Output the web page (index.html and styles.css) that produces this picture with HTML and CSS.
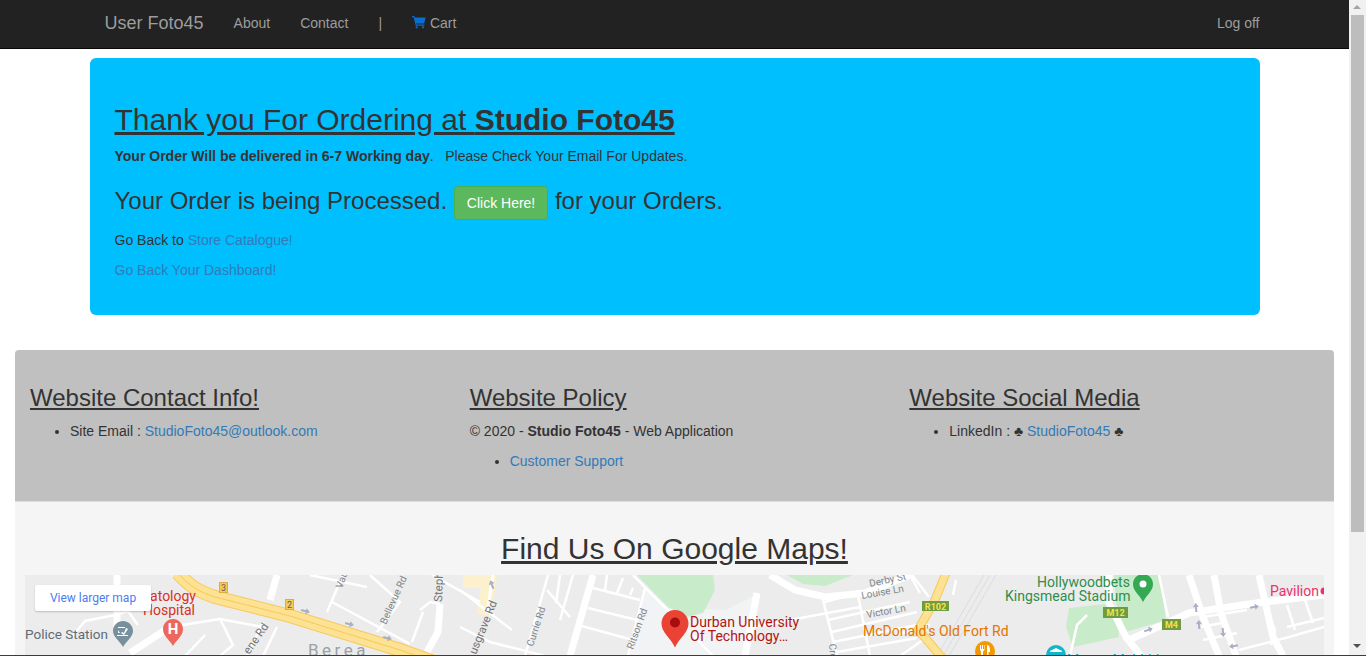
FILE: index.html
```html
<!DOCTYPE html>
<html>
<head>
  <title>Studio Foto45</title>
  <link rel="stylesheet" href="styles.css">
</head>
<body>

  <nav class="navbar">
    <div class="nav-inner">
      <a class="brand" href="#">User Foto45</a>
      <a class="nav-link" href="#">About</a>
      <a class="nav-link" href="#">Contact</a>
      <span class="nav-link">|</span>
      <a class="nav-link" href="#">
        <svg class="cart" viewBox="0 0 15 14"><path d="M0 0.6h2.4l.6 1.7h11.6l-1.500 6.200H4.600l.4 1.300h8.300v1.200H4L1.700 1.800H0z"/><circle cx="5" cy="12.700" r="1.200"/><circle cx="11.800" cy="12.700" r="1.200"/></svg>
        Cart
      </a>
      <a class="nav-link log-off" href="#">Log off</a>
    </div>
  </nav>

  <div class="container">
    <section class="jumbotron">
      <h2 class="thanks">Thank you For Ordering at <b>Studio Foto45</b></h2>
      <p class="delivery"><b>Your Order Will be delivered in 6-7 Working day</b>. &nbsp; Please Check Your Email For Updates.</p>
      <h3 class="processed">Your Order is being Processed. <a class="btn-success" href="#">Click Here!</a> for your Orders.</h3>
      <p class="back">Go Back to <a href="#">Store Catalogue!</a></p>
      <p class="back"><a href="#">Go Back Your Dashboard!</a></p>
    </section>
  </div>

  <footer class="panel">
    <div class="panel-top">
      <div class="col">
        <h3>Website Contact Info!</h3>
        <ul>
          <li>Site Email : <a href="#">StudioFoto45@outlook.com</a></li>
        </ul>
      </div>
      <div class="col">
        <h3>Website Policy</h3>
        <p>© 2020 - <b>Studio Foto45</b> - Web Application</p>
        <ul>
          <li><a href="#">Customer Support</a></li>
        </ul>
      </div>
      <div class="col">
        <h3>Website Social Media</h3>
        <ul>
          <li>LinkedIn : ♣ <a href="#">StudioFoto45</a> ♣</li>
        </ul>
      </div>
    </div>
    <div class="panel-bottom">
      <h2 class="maps-title">Find Us On Google Maps!</h2>
      <div class="map">
        <svg class="map-svg" viewBox="0 0 1299 81" width="1299" height="81">
          <!-- campus tint and parks -->
          <path class="campus" d="M620 13L643 32L700 35L730 20L722 81H605z"/>
          <path class="park" d="M612 0H688L690 15L678 38L662 42L643 32z"/>
          <path class="park" d="M762 0H828L800 11L778 9z"/>
          <path class="park" d="M1089 0H1134L1141 45L1101 57L1091 28z"/>
          <path class="park" d="M1044 33L1089 28L1094 62L1048 72L1041 52z"/>
          <path class="rail" d="M971 0L924 81M965 0L918 81M959 0L912 81"/>
          <path class="hwy-pale" d="M465 0L459 40"/>
          <path class="hwy-pale" d="M445 0h10v6h-10z"/>
          <!-- minor roads -->
          <g class="road">
            <path d="M47 62L60 46L90 40L103 36L113 50"/>
            <path d="M145 52L195 44L208 70L195 81M195 44L238 52"/>
            <path d="M238 47L222 81M252 52L238 81M180 60L160 81"/>
            <path d="M285 0L342 12M318 0L302 37M307 27L385 69M345 0L375 27L352 57"/>
            <path d="M398 37L387 67M395 35L405 27L415 29M407 0L455 27"/>
            <path d="M435 15L487 55M435 52L465 67L520 81"/>
            <path d="M523 0L500 81M522 15L545 42M535 0L531 28M548 0L535 45"/>
            <path d="M568 13L615 25M563 33L612 45M553 50L608 65M582 0L580 15M598 3L592 18M608 13L605 20"/>
            <path d="M608 0L688 81M620 13L603 81"/>
            <path d="M728 52L835 32M798 25L812 81M832 15L845 81M800 27L832 18"/>
            <path d="M803 45L885 27M807 57L892 37M808 67L892 50M812 77L892 63M885 0L895 18"/>
            <path d="M887 0L904 22M931 5L928 20M870 60L905 50M905 60L875 81"/>
            <path d="M1134 0L1143 42M1045 81L1052 50L1062 40M1214 75L1264 62L1299 52"/>
            <path d="M1178 42L1222 35M1240 30L1250 55L1246 70M1248 25L1299 15M1262 30L1270 55M1280 25L1288 48M1262 52L1299 43"/>
            <path d="M1178 65L1212 58M1176 52L1202 47"/>
          </g>
          <g class="road-major">
            <path d="M92 0V52"/>
            <path d="M105 78L145 52"/>
            <path d="M252 0L245 25"/>
            <path d="M415 29L413 57L402 77"/>
            <path d="M568 0L545 81"/>
            <path d="M745 0L770 15L800 22L840 18L885 0"/>
            <path d="M732 18L720 81"/>
            <path d="M1084 0L1084 28L1101 62L1116 81"/>
            <path d="M1104 65L1164 38L1231 28L1299 20"/>
            <path d="M1164 0L1178 42L1194 81"/>
            <path d="M1189 0L1196 38L1211 81"/>
            <path d="M1234 0L1248 62L1258 81"/>
          </g>
          <path class="road-center" d="M468 0L462 38"/>
          <!-- highways -->
          <path class="hwy-edge" d="M153 -2C165 12 175 17 190 22L265 41L375 75L440 98"/>
          <path class="hwy" d="M153 -2C165 12 175 17 190 22L265 41L375 75L440 98"/>
          <path class="hwy-line" d="M153 -2C165 12 175 17 190 22L265 41L375 75L440 98"/>
          <path class="hwy-edge thin" d="M921 -2L910 25L893 55L902 65L918 84"/>
          <path class="hwy thin" d="M921 -2L910 25L893 55L902 65L918 84"/>
          <!-- one way arrows -->
          <g class="oneway">
            <path transform="translate(280,36) rotate(15)" d="M-4 -1H1V-3L5 0L1 3V1H-4z"/>
            <path transform="translate(324,49) rotate(15)" d="M-4 -1H1V-3L5 0L1 3V1H-4z"/>
            <path transform="translate(362,63) rotate(15)" d="M-4 -1H1V-3L5 0L1 3V1H-4z"/>
            <path transform="translate(467,10) rotate(-110)" d="M-4 -1H1V-3L5 0L1 3V1H-4z"/>
            <path transform="translate(1123,55) rotate(-20)" d="M-4 -1H1V-3L5 0L1 3V1H-4z"/>
            <path transform="translate(1171,33) rotate(-95)" d="M-4 -1H1V-3L5 0L1 3V1H-4z"/>
            <path transform="translate(1174,50) rotate(-95)" d="M-4 -1H1V-3L5 0L1 3V1H-4z"/>
            <path transform="translate(1198,57) rotate(85)" d="M-4 -1H1V-3L5 0L1 3V1H-4z"/>
            <path transform="translate(1209,71) rotate(170)" d="M-4 -1H1V-3L5 0L1 3V1H-4z"/>
            <path transform="translate(1229,32) rotate(-10)" d="M-4 -1H1V-3L5 0L1 3V1H-4z"/>
          </g>
          <!-- road labels -->
          <rect class="shield-y" x="194.500" y="7.500" width="8" height="10"/><text class="shield-y-t" x="198.500" y="16">3</text>
          <rect class="shield-y" x="260.500" y="24.500" width="8" height="10"/><text class="shield-y-t" x="264.500" y="33">2</text>
          <rect class="shield-g" x="897" y="26" width="27" height="10"/><text class="shield-t" x="910.500" y="34.500">R102</text>
          <rect class="shield-g" x="1078" y="32" width="25" height="11"/><text class="shield-t" x="1090.500" y="41">M12</text>
          <rect class="shield-g" x="1137" y="44" width="19" height="11"/><text class="shield-t" x="1146.500" y="53">M4</text>
          <g class="street">
            <text transform="translate(317,14) rotate(-70)">Vau</text>
            <text transform="translate(361,50) rotate(-66)">Bellevue Rd</text>
            <text class="street-big" transform="translate(417,27) rotate(-88)">Steph</text>
            <text class="street-big" transform="translate(224,80) rotate(-55)">ene Rd</text>
            <text class="street-big" transform="translate(451,80) rotate(-68)">usgrave Rd</text>
            <text transform="translate(508,72) rotate(-72)">Currie Rd</text>
            <text transform="translate(608,75) rotate(-70)">Ritson Rd</text>
            <text transform="translate(845,12) rotate(-12)">Derby St</text>
            <text transform="translate(837,24) rotate(-10)">Louise Ln</text>
            <text transform="translate(842,43) rotate(-10)">Victor Ln</text>
            <text transform="translate(804,69) rotate(85)">Cro</text>
          </g>
          <text class="suburb" x="283" y="81">Berea</text>
          <!-- place labels -->
          <text class="lbl-red end" x="171" y="26">atology</text>
          <text class="lbl-red end" x="170" y="40">Hospital</text>
          <text class="lbl-grey" x="0" y="64">Police Station</text>
          <text class="lbl-uni" x="665" y="52">Durban University</text>
          <text class="lbl-uni" x="665" y="66">Of Technology…</text>
          <text class="lbl-food" x="838" y="61">McDonald's Old Fort Rd</text>
          <text class="lbl-green" x="1012" y="12">Hollywoodbets</text>
          <text class="lbl-green" x="980" y="26">Kingsmead Stadium</text>
          <text class="lbl-pink" x="1245" y="21">Pavilion</text>
          <text class="lbl-museum" x="1042" y="90">Moses Mabhida</text>
          <!-- pins -->
          <path class="pin-grey" d="M98 46C103 46 108 50 108 56C108 62 102 65 98 72C94 65 88 62 88 56C88 50 93 46 98 46z"/>
          <path class="pin-white" d="M93 52h7v1h-7zM101 53l2 1-4 6-3-2 1-1 2 1zM93 55l2 3h-2zM92 60h11v1H92z"/>
          <path class="pin-red" d="M148 44C153.500 44 158 48.500 158 54C158 61 152 64 148 71C144 64 138 61 138 54C138 48.500 142.500 44 148 44z"/>
          <text class="pin-h" x="148" y="59">H</text>
          <path class="pin-main" d="M650 35C657.500 35 663.500 41 663.500 48.500C663.500 57.500 654.500 62.500 650 72.500C645.500 62.500 636.500 57.500 636.500 48.500C636.500 41 642.500 35 650 35z"/>
          <circle class="pin-dot" cx="650" cy="47.500" r="5"/>
          <path class="pin-green" d="M1118 -1C1123.500 -1 1128 3.500 1128 9C1128 16 1122 19 1118 27C1114 19 1108 16 1108 9C1108 3.500 1112.500 -1 1118 -1z"/>
          <circle class="pin-white" cx="1118" cy="9" r="3.500"/>
          <circle class="pin-pink" cx="1299" cy="16" r="3.500"/>
          <circle class="pin-food" cx="960" cy="76" r="10"/>
          <path class="pin-white" d="M955 70h1v4h1v-4h1v4h1v-4h.5v5l-1.500 1.500V83h-2v-6.500L955 75zM962 70c2 0 3 2 3 5v2h-1.500v6H962z"/>
          <circle class="pin-museum" cx="1031" cy="80" r="10"/>
          <path class="pin-white" d="M1031 73l6 3v1h-12v-1z"/>
        </svg>
        <a class="larger-map" href="#">View larger map</a>
      </div>
    </div>
  </footer>

  <!-- drawn scrollbar, the window itself does not scroll -->
  <div class="scrollbar">
    <div class="arrow-up"></div>
    <div class="thumb"></div>
    <div class="arrow-down"></div>
  </div>
  <div class="window-edge"></div>

</body>
</html>
```

FILE: styles.css
```css
* {
  box-sizing: border-box;
}
html, body {
  height: 656px;
  overflow: hidden;
}
body {
  margin: 0;
  width: 1349px;
  background-color: #fff;
  color: #333;
  font-family: "Liberation Sans", Arial, sans-serif;
  font-size: 14px;
  line-height: 20px;
}
a {
  color: #337ab7;
  text-decoration: none;
}
p {
  margin: 0 0 10px;
}

/* navbar */
.navbar {
  height: 49px;
  background-color: #222;
  border-bottom: 1px solid #080808;
}
.nav-inner {
  width: 1170px;
  margin: 0 auto;
  height: 46px;
  display: flex;
  align-items: center;
  padding-left: 15px;
}
.brand {
  color: #9d9d9d;
  font-size: 18px;
  margin-right: 15px;
}
.nav-link {
  color: #9d9d9d;
  padding: 0 15px;
  white-space: nowrap;
}
.cart {
  width: 14px;
  height: 14px;
  fill: #0a6ed1;
  vertical-align: -1px;
}
.log-off {
  margin-left: auto;
  padding-right: 0;
}

/* jumbotron */
.container {
  width: 1170px;
  margin: 0 auto;
  padding-top: 9px;
}
.jumbotron {
  height: 257px;
  background-color: #00bfff;
  border-radius: 6px;
  padding: 44px 25px 0;
}
.thanks {
  margin: 0 0 8px;
  font-size: 30px;
  font-weight: 400;
  line-height: 36px;
  text-decoration: underline;
}
.delivery {
  margin-bottom: 18px;
}
.processed {
  margin: 0 0 12px;
  height: 34px;
  font-size: 24px;
  font-weight: 400;
  line-height: 34px;
}
.btn-success {
  display: inline-block;
  padding: 6px 12px;
  font-size: 14px;
  line-height: 20px;
  color: #fff;
  background-color: #5cb85c;
  border: 1px solid #4cae4c;
  border-radius: 4px;
  vertical-align: 1px;
}
.back {
  margin-bottom: 10px;
}

/* footer panel */
.panel {
  margin: 35px 15px 0;
}
.panel-top {
  display: flex;
  height: 152px;
  padding: 15px 0 0 15px;
  background-color: #c0c0c0;
  border-bottom: 1px solid #ddd;
  border-radius: 4px 4px 0 0;
}
.col {
  flex: none;
  width: 439.67px;
}
.col h3 {
  margin: 20px 0 10px;
  font-size: 24px;
  font-weight: 400;
  line-height: 26px;
  text-decoration: underline;
}
.col ul {
  margin: 0;
  padding-left: 40px;
}
.panel-bottom {
  padding: 0 10px;
  background-color: #f5f5f5;
}
.maps-title {
  margin: 0;
  padding-top: 29px;
  height: 73px;
  text-align: center;
  font-size: 30px;
  font-weight: 400;
  line-height: 36px;
  text-decoration: underline;
}

/* map */
.map {
  position: relative;
  height: 81px;
  background-color: #ececec;
  overflow: hidden;
}
.map-svg {
  display: block;
  font-family: Roboto, "Liberation Sans", sans-serif;
}
.larger-map {
  position: absolute;
  left: 10px;
  top: 10px;
  width: 116px;
  height: 26px;
  background-color: #fff;
  color: #4d7cf0;
  font-family: Roboto, "Liberation Sans", sans-serif;
  font-size: 12px;
  line-height: 26px;
  text-align: center;
  border-radius: 2px;
  box-shadow: 0 1px 2px rgba(0, 0, 0, 0.2);
}
.campus { fill: #f1f3f4; }
.park { fill: #c8ebca; }
.rail { fill: none; stroke: #dadce0; stroke-width: 1; }
.road { fill: none; stroke: #fff; stroke-width: 2.5; }
.road-major { fill: none; stroke: #fff; stroke-width: 7; }
.road-center { fill: none; stroke: #fff; stroke-width: 3; }
.hwy-edge { fill: none; stroke: #f7c95c; stroke-width: 14; }
.hwy { fill: none; stroke: #fde293; stroke-width: 12; }
.hwy-line { fill: none; stroke: #f7c95c; stroke-width: 1; }
.hwy-edge.thin { stroke-width: 9; }
.hwy.thin { stroke-width: 7; }
.hwy-pale { fill: none; stroke: #fdf0cc; stroke-width: 14; }
.oneway { fill: #a9afc4; }
.shield-y { fill: #f7cb4d; stroke: #e0ac3a; }
.shield-y-t { font-size: 9px; fill: #5c5a70; text-anchor: middle; }
.shield-g { fill: #6f9c3f; }
.shield-t { font-size: 9px; font-weight: 700; fill: #f8e14b; text-anchor: middle; }
.street { font-size: 10px; fill: #80868b; }
.street-big { font-size: 11.5px; fill: #70757a; }
.suburb { font-size: 17px; fill: #9aa0a6; letter-spacing: 3.5px; }
.end { text-anchor: end; }
.lbl-red { font-size: 14px; fill: #d93025; }
.lbl-grey { font-size: 13.5px; fill: #5f6c75; }
.lbl-uni { font-size: 14px; fill: #b31412; }
.lbl-food { font-size: 14px; fill: #e37400; }
.lbl-green { font-size: 14px; fill: #2d8f4e; }
.lbl-pink { font-size: 14px; fill: #e8336f; }
.lbl-museum { font-size: 14px; fill: #129eaf; }
.pin-grey { fill: #78909c; }
.pin-red { fill: #ee675c; }
.pin-h { font-size: 15px; font-weight: 700; fill: #fff; text-anchor: middle; }
.pin-main { fill: #ea4335; }
.pin-dot { fill: #a50e0e; }
.pin-green { fill: #34a853; }
.pin-white { fill: #fff; }
.pin-pink { fill: #e8336f; }
.pin-food { fill: #f29900; }
.pin-museum { fill: #12b5cb; }

/* scrollbar */
.scrollbar {
  position: fixed;
  top: 0;
  right: 0;
  width: 17px;
  height: 656px;
  background-color: #f1f1f1;
}
.thumb {
  position: absolute;
  top: 15px;
  left: 2px;
  width: 13px;
  height: 517px;
  background-color: #bdbdbd;
}
.arrow-up, .arrow-down {
  position: absolute;
  left: 4px;
  width: 0;
  height: 0;
  border-left: 4px solid transparent;
  border-right: 4px solid transparent;
}
.arrow-up {
  top: 5px;
  border-bottom: 4px solid #a3a3a3;
}
.arrow-down {
  bottom: 8px;
  border-top: 4px solid #505050;
}
.window-edge {
  position: fixed;
  left: 0;
  right: 0;
  bottom: 0;
  height: 1px;
  background-color: #3c3c3c;
}
```
